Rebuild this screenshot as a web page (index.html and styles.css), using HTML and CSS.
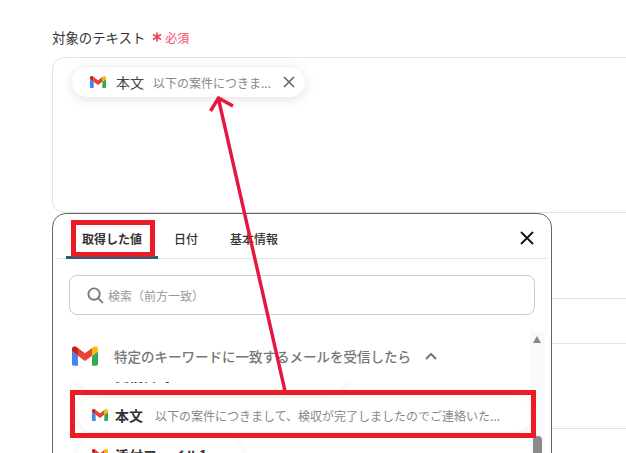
FILE: index.html
```html
<!DOCTYPE html>
<html lang="ja">
<head>
<meta charset="utf-8">
<title>対象のテキスト</title>
<link rel="stylesheet" href="styles.css">
</head>
<body>
<svg class="defs" aria-hidden="true">
  <symbol id="gmail" viewBox="0 0 24 18">
    <path fill="#4285F4" d="M1.6 18h3.9V8.7L0 4.6v11.8C0 17.3.7 18 1.6 18z"/>
    <path fill="#34A853" d="M18.5 18h3.9c.9 0 1.6-.7 1.6-1.6V4.6l-5.5 4.1z"/>
    <path fill="#FBBC04" d="M18.5 1.6v7.1L24 4.6V2.5c0-2-2.3-3.2-3.9-2z"/>
    <path fill="#EA4335" d="M5.5 8.7V1.6L12 6.5l6.5-4.9v7.1L12 13.6z"/>
    <path fill="#C5221F" d="M0 2.5v2.1l5.5 4.1V1.6L3.9.5C2.3-.7 0 .5 0 2.5z"/>
  </symbol>
</svg>

<main class="page">
  <div class="label-row">
    <span class="label">対象のテキスト</span>
    <span class="required"><svg class="star" viewBox="0 0 10 10"><path d="M5 .5v9M1 2.6l8 4.8M9 2.6L1 7.4"/></svg>必須</span>
  </div>
  <div class="textbox">
    <div class="chip">
      <svg class="gmail-sm"><use href="#gmail"/></svg>
      <span class="chip-name">本文</span>
      <span class="chip-value">以下の案件につきま...</span>
      <svg class="chip-x" viewBox="0 0 12 12"><path d="M1 1l10 10M11 1L1 11"/></svg>
    </div>
  </div>
  <div class="bg-row bg-row-a"></div>
  <div class="bg-row bg-row-b"></div>
  <div class="bg-row bg-row-c"></div>
</main>

<section class="panel">
  <header class="tabs">
    <div class="tab tab-active">取得した値</div>
    <div class="tab">日付</div>
    <div class="tab">基本情報</div>
    <svg class="panel-close" viewBox="0 0 16 16"><path d="M2 2l12 12M14 2L2 14"/></svg>
  </header>
  <div class="search">
    <svg class="search-icon" viewBox="0 0 18 18"><circle cx="7.5" cy="7.5" r="6"/><path d="M12 12l4.8 4.8"/></svg>
    <span class="search-text">検索（前方一致）</span>
  </div>
  <div class="panel-body">
    <div class="results">
      <div class="group-head">
        <svg class="gmail-lg"><use href="#gmail"/></svg>
        <span class="group-title">特定のキーワードに一致するメールを受信したら</span>
        <svg class="chevron" viewBox="0 0 12 8"><path d="M1 7l5-5 5 5"/></svg>
      </div>
      <div class="list">
        <div class="rows">
          <div class="row row-date">
            <svg class="gmail-sm"><use href="#gmail"/></svg>
            <span class="row-name">受信日時</span>
            <span class="row-value">2023-11-01 09:00:00</span>
          </div>
          <div class="row row-full">
            <svg class="gmail-sm"><use href="#gmail"/></svg>
            <span class="row-name">本文</span>
            <span class="row-value">以下の案件につきまして、検収が完了しましたのでご連絡いた...</span>
          </div>
          <div class="row row-file">
            <svg class="gmail-sm"><use href="#gmail"/></svg>
            <span class="row-name">添付ファイル1</span>
          </div>
        </div>
      </div>
    </div>
    <div class="scrollbar">
      <span class="scroll-up"></span>
      <span class="scroll-thumb"></span>
    </div>
  </div>
</section>

<svg class="annotation" viewBox="0 0 626 453" aria-hidden="true">
  <path class="arrow" d="M285 391L218.5 99M210.5 111L218.5 98L233 106"/>
  <rect class="mark" x="73.5" y="222.5" width="79" height="32"/>
  <rect class="mark" x="72.5" y="392.5" width="461" height="43"/>
</svg>
</body>
</html>
```

FILE: styles.css
```css
* { box-sizing: border-box; }

html, body {
  margin: 0;
  width: 626px;
  height: 453px;
  overflow: hidden;
  background: #fff;
}

body {
  position: relative;
  font-family: "Noto Sans CJK JP", "Noto Sans", sans-serif;
  color: #333;
}

.defs { position: absolute; width: 0; height: 0; }

.page { padding: 27px 0 0 52px; width: 700px; }

.label-row { display: flex; align-items: center; gap: 7px; height: 20px; margin-bottom: 10px; }
.label { font-size: 13.4px; color: #333; }
.required { display: flex; align-items: center; gap: 3px; font-size: 12px; color: #f54d68; }
.star { width: 10px; height: 10px; fill: none; stroke: #f0405f; stroke-width: 1.7; }

.textbox {
  height: 156px;
  border: 1px solid #e2e2e2;
  border-radius: 12px;
  padding: 9px 19px;
}

.chip {
  display: flex;
  align-items: center;
  width: 233px;
  height: 30px;
  padding-left: 18px;
  border-radius: 15px;
  background: #fff;
  box-shadow: 0 2px 12px rgba(0, 0, 0, .12);
}

.gmail-sm { width: 16px; height: 12px; flex: none; }
.gmail-lg { width: 26px; height: 20px; flex: none; }

.chip-name { margin-left: 10px; font-size: 14px; color: #444; }
.chip-value { margin-left: 9px; font-size: 12px; color: #888; white-space: nowrap; }
.chip-x { width: 12px; height: 12px; margin-left: auto; margin-right: 10px; fill: none; stroke: #666; stroke-width: 1.6; }

.bg-row { border-bottom: 1px solid #e2e2e2; }
.bg-row-a { height: 86px; }
.bg-row-b { height: 45px; }
.bg-row-c { height: 85px; }

.panel {
  position: absolute;
  left: 52px;
  top: 213px;
  width: 500px;
  height: 260px;
  padding: 0 4px;
  background: #fff;
  border: 1px solid #666;
  border-radius: 14px;
}

.tabs {
  display: flex;
  align-items: stretch;
  height: 45px;
  padding-left: 9px;
  border-bottom: 1px solid #e4e4e4;
}

.tab {
  padding: 0 16px;
  font-size: 12px;
  font-weight: 500;
  line-height: 50px;
  color: #333;
}

.tab-active { font-weight: 700; border-bottom: 3px solid #0d6a80; margin-bottom: -1px; }

.panel-close {
  width: 16px;
  height: 16px;
  margin: 16px 12px 0 auto;
  fill: none;
  stroke: #111;
  stroke-width: 1.8;
}

.search {
  display: flex;
  align-items: center;
  gap: 4px;
  height: 40px;
  margin: 16px 12px 0;
  padding-left: 17px;
  border: 1px solid #ccc;
  border-radius: 8px;
}

.search-icon { width: 17px; height: 17px; fill: none; stroke: #777; stroke-width: 1.9; }
.search-text { font-size: 12px; color: #999; }

.panel-body { display: flex; margin-top: 16px; height: 138px; }

.results { flex: 1; min-width: 0; }

.group-head {
  display: flex;
  align-items: center;
  height: 51px;
  padding: 0 0 1px 15px;
}

.group-title { margin-left: 16px; font-size: 13.5px; font-weight: 500; color: #777; white-space: nowrap; }
.chevron { width: 12px; height: 8px; margin-left: 14px; fill: none; stroke: #777; stroke-width: 2; }

.list { height: 87px; overflow: hidden; }
.rows { margin-top: -24px; display: flex; flex-direction: column; align-items: flex-start; gap: 6px; padding-left: 21px; }

.row {
  display: flex;
  align-items: center;
  height: 34px;
  padding-left: 14px;
  border-radius: 17px;
  background: #fff;
  box-shadow: 0 2px 10px rgba(0, 0, 0, .08);
  white-space: nowrap;
}

.row-date { width: 270px; }
.row-full { width: 454px; }
.row-file { width: 164px; }

.row-name { margin-left: 7px; font-size: 14px; font-weight: 700; color: #333; }
.row-value { margin-left: 12px; font-size: 12px; color: #888; }

.scrollbar {
  position: relative;
  flex: none;
  width: 15px;
  margin-right: 2px;
  background: #f9f9f9;
}

.scroll-up {
  position: absolute;
  left: 3px;
  top: 5px;
  border-left: 4.5px solid transparent;
  border-right: 4.5px solid transparent;
  border-bottom: 7px solid #888;
}

.scroll-thumb {
  position: absolute;
  left: 3px;
  top: 105px;
  width: 9px;
  height: 40px;
  border-radius: 4px;
  background: #8a8a8a;
}

.annotation { position: absolute; left: 0; top: 0; width: 626px; height: 453px; }
.arrow { fill: none; stroke: #e5173f; stroke-width: 3.4; }
.mark { fill: none; stroke: #ed1c24; stroke-width: 5; }
```
